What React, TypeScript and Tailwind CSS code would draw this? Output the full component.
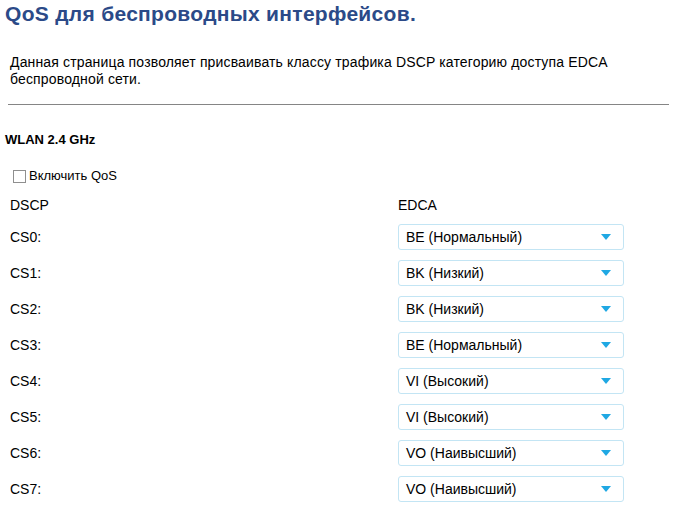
import React from 'react';

const rows = [
  { dscp: 'CS0:', edca: 'BE (Нормальный)' },
  { dscp: 'CS1:', edca: 'BK (Низкий)' },
  { dscp: 'CS2:', edca: 'BK (Низкий)' },
  { dscp: 'CS3:', edca: 'BE (Нормальный)' },
  { dscp: 'CS4:', edca: 'VI (Высокий)' },
  { dscp: 'CS5:', edca: 'VI (Высокий)' },
  { dscp: 'CS6:', edca: 'VO (Наивысший)' },
  { dscp: 'CS7:', edca: 'VO (Наивысший)' },
];

function Select({ value }: { value: string }) {
  return (
    <div className="w-[226px] h-[26px] flex items-center justify-between pl-[7px] pr-[12px] border border-[#c3e5f4] rounded-[3px] bg-white text-[14px] text-black">
      <span>{value}</span>
      <svg width="10" height="6" viewBox="0 0 10 6">
        <polygon points="0,0 10,0 5,6" fill="#1fa8e3" />
      </svg>
    </div>
  );
}

export default function App() {
  return (
    <div className="w-[680px] h-[506px] overflow-hidden bg-white text-[#1a1a1a] font-['Liberation_Sans',Arial,sans-serif]">
      {/* Header */}
      <h1 className="mt-[2px] pl-[5px] text-[21px] leading-[24px] tracking-[0.3px] font-bold text-[#2b4a88]">
        QoS для беспроводных интерфейсов.
      </h1>
      <p className="mt-[28px] px-[10px] text-[14px] leading-[17px] tracking-[0.15px] text-black">
        Данная страница позволяет присваивать классу трафика DSCP категорию доступа EDCA беспроводной сети.
      </p>
      <div className="mt-[16px] ml-[8px] mr-[11px] h-px bg-[#858585]" />

      {/* WLAN section */}
      <div className="mt-[27px] pl-[5px] text-[13px] leading-[15px] font-bold text-black">WLAN 2.4 GHz</div>
      <label className="mt-[21px] ml-[13px] h-[16px] flex items-center gap-[3px] text-[13px] text-black">
        <span className="w-[13px] h-[13px] border border-[#8f8f8f] bg-white" />
        Включить QoS
      </label>

      <div className="mt-[13px] flex text-[14px] leading-[16px] text-black">
        <span className="w-[398px] pl-[10px]">DSCP</span>
        <span>EDCA</span>
      </div>

      <div className="mt-[11px] flex flex-col gap-[10px]">
        {rows.map((r) => (
          <div key={r.dscp} className="flex items-center text-[14px] text-black">
            <span className="w-[398px] pl-[10px]">{r.dscp}</span>
            <Select value={r.edca} />
          </div>
        ))}
      </div>
    </div>
  );
}
